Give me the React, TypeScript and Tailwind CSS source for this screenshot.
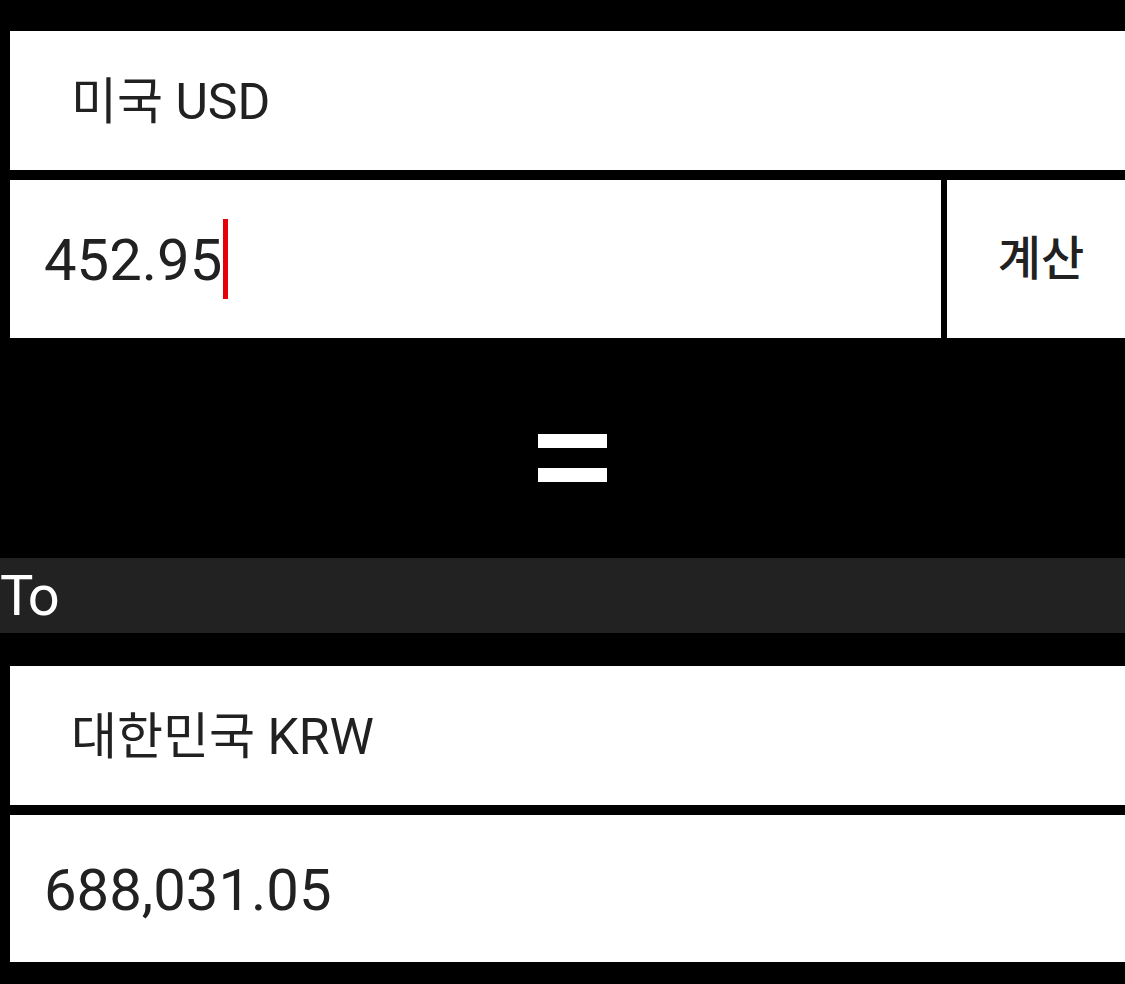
import React from "react";

const font = { fontFamily: 'Roboto, "Noto Sans CJK KR", sans-serif' };

export default function App() {
  return (
    <div
      className="w-[1125px] h-[984px] bg-black overflow-hidden flex flex-col pt-[31px]"
      style={font}
    >
      <div className="pl-[10px] flex">
        <div className="shrink-0 w-[1125px] h-[139px] bg-white flex items-center pl-[61px] pt-[4px] text-[50px] text-[#212121]">
          미국 USD
        </div>
      </div>
      <div className="pl-[10px] mt-[10px] flex">
        <div className="shrink-0 w-[931px] h-[158px] bg-white flex items-center pl-[34px] text-[58px] text-[#212121]">
          <span className="pt-[3px]">452.95</span>
          <span className="w-[5px] h-[80px] bg-[#e5000a] ml-[1px]" />
        </div>
        <div className="shrink-0 ml-[6px] w-[188px] h-[158px] bg-white flex items-center justify-center text-[47px] font-medium text-[#212121]">
          계산
        </div>
      </div>
      <div className="h-[220px] flex flex-col items-center justify-center pl-[20px] pt-[20px] gap-[20px]">
        <div className="w-[69px] h-[14px] bg-white" />
        <div className="w-[69px] h-[14px] bg-white" />
      </div>
      <div className="h-[75px] bg-[#222222] flex items-center text-white text-[56px] leading-none tracking-[-3px]">
        To
      </div>
      <div className="pl-[10px] mt-[33px] flex">
        <div className="shrink-0 w-[1125px] h-[139px] bg-white flex items-center pl-[61px] pt-[4px] text-[50px] text-[#212121]">
          대한민국 KRW
        </div>
      </div>
      <div className="pl-[10px] mt-[10px] flex">
        <div className="shrink-0 w-[1125px] h-[147px] bg-white flex items-center pl-[34px] pt-[3px] text-[58px] text-[#212121]">
          688,031.05
        </div>
      </div>
    </div>
  );
}
